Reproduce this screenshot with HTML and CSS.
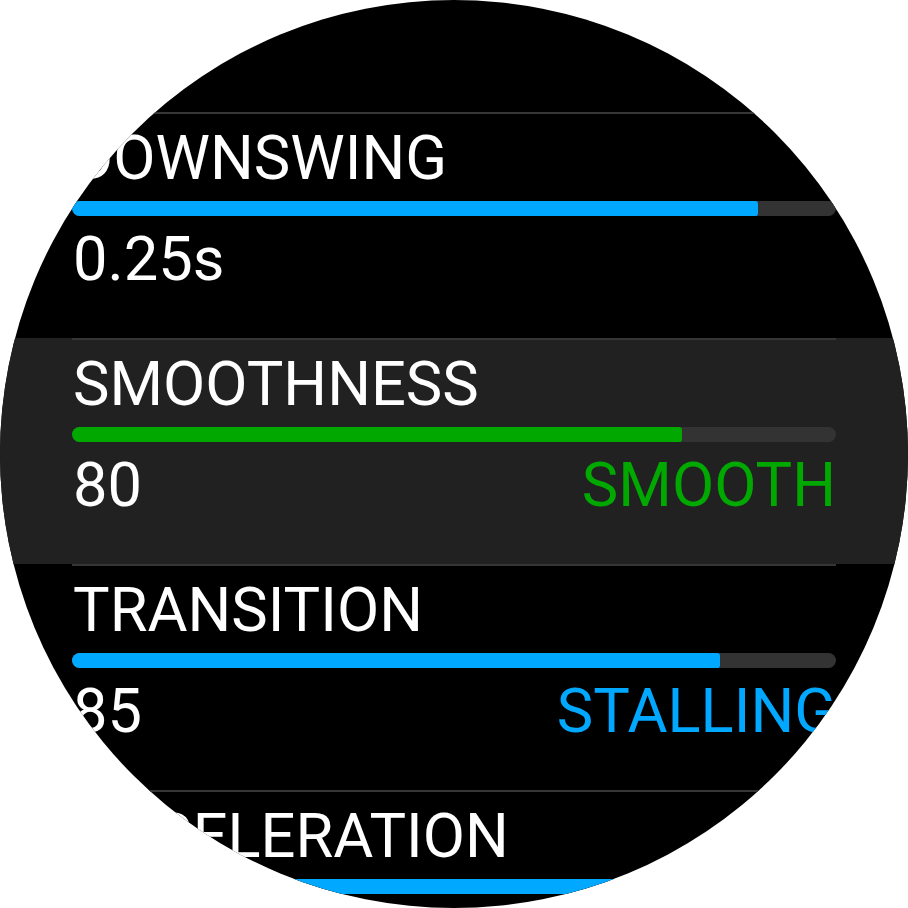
FILE: index.html
```html
<!DOCTYPE html>
<html>
<head>
<meta charset="utf-8">
<link rel="stylesheet" href="styles.css">
</head>
<body>
<div class="watch">
  <div class="list">
    <div class="row">
      <div class="inner">
        <div class="label">DOWNSWING</div>
        <div class="track"><div class="fill blue" style="width:89.8%"></div></div>
        <div class="values"><span class="val">0.25s</span></div>
      </div>
    </div>
    <div class="row selected">
      <div class="inner">
        <div class="label">SMOOTHNESS</div>
        <div class="track"><div class="fill green" style="width:79.8%"></div></div>
        <div class="values"><span class="val">80</span><span class="status green-text">SMOOTH</span></div>
      </div>
    </div>
    <div class="row">
      <div class="inner">
        <div class="label">TRANSITION</div>
        <div class="track"><div class="fill blue" style="width:84.8%"></div></div>
        <div class="values"><span class="val">85</span><span class="status blue-text">STALLING</span></div>
      </div>
    </div>
    <div class="row">
      <div class="inner">
        <div class="label">ACCELERATION</div>
        <div class="track"><div class="fill blue" style="width:90%"></div></div>
      </div>
    </div>
  </div>
</div>
</body>
</html>
```

FILE: styles.css
```css
html, body {
  margin: 0;
  padding: 0;
  background: #ffffff;
}

.watch {
  width: 908px;
  height: 908px;
  border-radius: 50%;
  overflow: hidden;
  background: #000000;
  font-family: Roboto, "Liberation Sans", sans-serif;
  color: #ffffff;
}

.list {
  padding-top: 112px;
  display: flex;
  flex-direction: column;
}

.row {
  height: 226px;
  flex: none;
}

.row.selected {
  background: #212121;
}

.inner {
  margin: 0 72px;
  border-top: 2px solid #363636;
  padding-top: 13px;
  display: flex;
  flex-direction: column;
  gap: 12px;
}

.label,
.values {
  font-size: 61.4px;
  line-height: 62px;
  height: 62px;
  white-space: nowrap;
}

.label {
  padding-left: 1px;
}

.values {
  display: flex;
  justify-content: space-between;
}

.val {
  padding-left: 1px;
}

.track {
  height: 15px;
  border-radius: 8px;
  background: #333333;
  display: flex;
}

.fill {
  height: 100%;
  border-radius: 8px 3px 3px 8px;
}

.blue {
  background: #00a8ff;
}

.green {
  background: #00a800;
}

.blue-text {
  color: #00a8ff;
}

.green-text {
  color: #00a800;
}
```
